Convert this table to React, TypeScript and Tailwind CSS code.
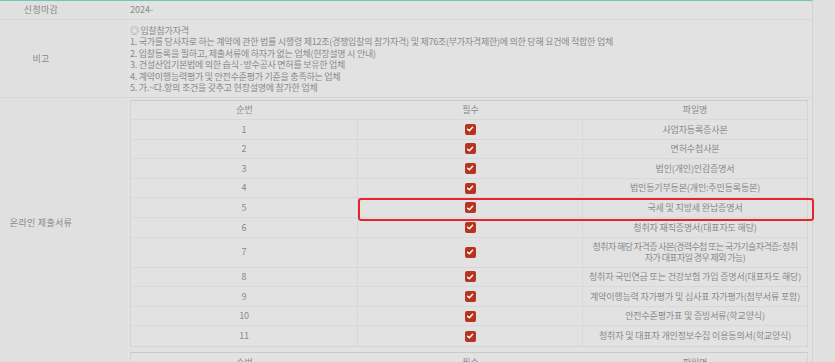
import React from "react";

const font = { fontFamily: '"Noto Sans CJK KR", "Noto Sans", sans-serif' };

const notes = [
  "◎ 입찰참가자격",
  "1. 국가를 당사자로 하는 계약에 관한 법률 시행령 제12조(경쟁입찰의 참가자격) 및 제76조(부가자격제한)에 의한 당해 요건에 적합한 업체",
  "2. 입찰등록을 필하고, 제출서류에 하자가 없는 업체(현장설명 시 안내)",
  "3. 건설산업기본법에 의한 습식·방수공사 면허를 보유한 업체",
  "4. 계약이행능력평가 및 안전수준평가 기준을 충족하는 업체",
  "5. 가.~다.항의 조건을 갖추고 현장설명에 참가한 업체",
];

const docs: { no: number; name: string[]; tall?: boolean }[] = [
  { no: 1, name: ["사업자등록증사본"] },
  { no: 2, name: ["면허수첩사본"] },
  { no: 3, name: ["법인(개인)인감증명서"] },
  { no: 4, name: ["법인등기부등본(개인:주민등록등본)"] },
  { no: 5, name: ["국세 및 지방세 완납증명서"] },
  { no: 6, name: ["청취자 재직증명서(대표자도 해당)"] },
  { no: 7, name: ["청취자 해당 자격증 사본(경력수첩 또는 국가기술자격증: 청취", "자가 대표자일 경우 제외 가능)"], tall: true },
  { no: 8, name: ["청취자 국민연금 또는 건강보험 가입 증명서(대표자도 해당)"] },
  { no: 9, name: ["계약이행능력 자가평가 및 심사표 자가평가(첨부서류 포함)"] },
  { no: 10, name: ["안전수준평가표 및 증빙서류(학교양식)"] },
  { no: 11, name: ["청취자 및 대표자 개인정보수집 이용동의서(학교양식)"] },
];

function Check() {
  return (
    <span className="inline-flex h-[11px] w-[11px] items-center justify-center rounded-[2px] bg-[#b5331f]">
      <svg width="8" height="8" viewBox="0 0 10 10">
        <path d="M2 5.2 L4.2 7.3 L8.2 2.8" fill="none" stroke="#fff" strokeWidth="1.8" strokeLinecap="round" strokeLinejoin="round" />
      </svg>
    </span>
  );
}

function Label({ children }: { children: React.ReactNode }) {
  return <div className="w-[82px] text-center tracking-[0.3px]">{children}</div>;
}

export default function App() {
  return (
    <div
      className="h-[362px] w-[835px] overflow-hidden bg-[#e0e0e0] text-[9px] leading-[11.4px] text-[#8a8a8a]"
      style={font}
    >
      <div className="relative w-[813px] border-r border-t border-r-[#d3d3d3] border-t-[#6fc6bd]">
        {/* 신청마감 */}
        <div className="flex h-[19px] items-center border-b border-[#d6d6d6]">
          <div className="w-[127px] shrink-0">
            <Label>신청마감</Label>
          </div>
          <div className="flex h-full flex-1 items-center bg-[#e2e2e2] pl-[3px]">2024-</div>
        </div>

        {/* 비고 */}
        <div className="flex h-[78px] border-b border-[#d6d6d6]">
          <div className="flex w-[127px] shrink-0 items-center">
            <Label>비고</Label>
          </div>
          <div className="flex-1 bg-[#e2e2e2] pl-[3px] pt-[5px] tracking-[-0.25px]">
            {notes.map((n) => (
              <div key={n} className="whitespace-nowrap">{n}</div>
            ))}
          </div>
        </div>

        {/* 온라인 제출서류 */}
        <div className="flex">
          <div className="w-[127px] shrink-0 pt-[119px]">
            <Label>온라인 제출서류</Label>
          </div>
          <div className="flex-1 bg-[#e2e2e2] pl-[3px] pr-[4px] pt-[2px] tracking-[-0.15px]">
            <div className="border border-[#d4d4d4] border-t-[#c9c9c9]">
              <div className="grid h-[19px] grid-cols-[227px_225px_1fr] items-center border-b border-[#d8d8d8] text-center">
                <div>순번</div>
                <div>필수</div>
                <div>파일명</div>
              </div>
              {docs.map((d) => (
                <div
                  key={d.no}
                  className={`grid grid-cols-[227px_225px_1fr] border-b border-[#d8d8d8] text-center last:border-b-0 ${d.tall ? "h-[30px]" : "h-[19.6px]"}`}
                >
                  <div className="flex items-center justify-center border-r border-[#d8d8d8]">{d.no}</div>
                  <div className="flex items-center justify-center border-r border-[#d8d8d8]">
                    <Check />
                  </div>
                  <div
                    className={`flex flex-col items-center justify-center whitespace-nowrap ${d.tall ? "tracking-[-0.6px]" : ""}`}
                  >
                    {d.name.map((l) => (
                      <div key={l}>{l}</div>
                    ))}
                  </div>
                </div>
              ))}
            </div>
            <div className="mt-[5px] border border-[#d4d4d4] border-t-[#c9c9c9]">
              <div className="grid h-[19px] grid-cols-[227px_225px_1fr] items-center text-center">
                <div>순번</div>
                <div>필수</div>
                <div>파일명</div>
              </div>
            </div>
          </div>
        </div>

        {/* highlight box */}
        <div className="pointer-events-none absolute left-[358px] top-[197px] h-[23px] w-[456px] rounded-[3px] border-2 border-[#e4262a]" />
      </div>
    </div>
  );
}
